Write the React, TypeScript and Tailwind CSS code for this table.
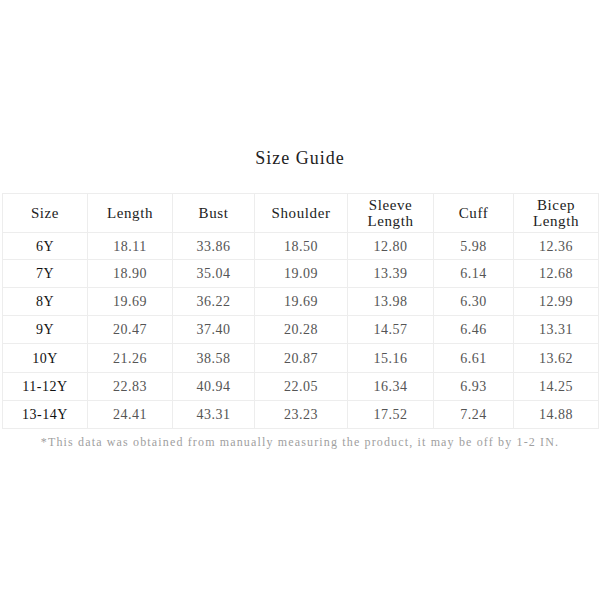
const headers: string[][] = [
  ['Size'],
  ['Length'],
  ['Bust'],
  ['Shoulder'],
  ['Sleeve', 'Length'],
  ['Cuff'],
  ['Bicep', 'Length'],
]

const widths = ['w-[85px]', 'w-[85px]', 'w-[82px]', 'w-[93px]', 'w-[86px]', 'w-[80px]', 'w-[85px]']

const rows: string[][] = [
  ['6Y', '18.11', '33.86', '18.50', '12.80', '5.98', '12.36'],
  ['7Y', '18.90', '35.04', '19.09', '13.39', '6.14', '12.68'],
  ['8Y', '19.69', '36.22', '19.69', '13.98', '6.30', '12.99'],
  ['9Y', '20.47', '37.40', '20.28', '14.57', '6.46', '13.31'],
  ['10Y', '21.26', '38.58', '20.87', '15.16', '6.61', '13.62'],
  ['11-12Y', '22.83', '40.94', '22.05', '16.34', '6.93', '14.25'],
  ['13-14Y', '24.41', '43.31', '23.23', '17.52', '7.24', '14.88'],
]

const rowHeights = ['h-[27px]', 'h-[28px]', 'h-[28px]', 'h-[28px]', 'h-[29px]', 'h-[28px]', 'h-[28px]']

export default function App() {
  return (
    <div className="w-[600px] h-[600px] bg-white font-['Liberation_Serif','Noto_Sans_CJK_SC',serif]">
      <div className="pt-[146px] text-center text-[18px] leading-[24px] tracking-[1px] text-[#222]">
        Size Guide
      </div>
      <table className="mt-[23px] ml-[2px] w-[596px] border-collapse table-fixed">
        <thead>
          <tr className="h-[39px]">
            {headers.map((h, i) => (
              <th
                key={i}
                className={`${widths[i]} border border-[#ededed] p-0 text-center align-middle font-normal text-[15px] leading-[16px] tracking-[0.6px] text-[#222]`}
              >
                {h.map((line) => (
                  <div key={line}>{line}</div>
                ))}
              </th>
            ))}
          </tr>
        </thead>
        <tbody>
          {rows.map((r, ri) => (
            <tr key={r[0]} className={rowHeights[ri]}>
              {r.map((v, ci) => (
                <td
                  key={ci}
                  className={`border border-[#ededed] p-0 text-center align-middle text-[14px] tracking-[0.5px] ${
                    ci === 0 ? 'text-[#111] font-medium' : 'text-[#555]'
                  }`}
                >
                  {v}
                </td>
              ))}
            </tr>
          ))}
        </tbody>
      </table>
      <div className="mt-[6px] text-center text-[12px] leading-[14px] tracking-[1.15px] text-[#a0a0a0]">
        *This data was obtained from manually measuring the product, it may be off by 1-2 IN.
      </div>
    </div>
  )
}
